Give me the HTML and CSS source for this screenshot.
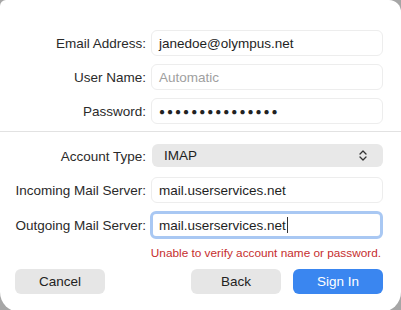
FILE: index.html
```html
<!DOCTYPE html>
<html lang="en">
<head>
    <meta charset="UTF-8" />
    <meta name="viewport" content="width=device-width, initial-scale=1" />
    <title>Add Account</title>
    <link rel="stylesheet" href="styles.css">
</head>
<body>
    <div class="dialog">
        <div class="fields">
            <label class="label" for="email">Email Address:</label>
            <div class="field"><span class="value">janedoe@olympus.net</span></div>
            <label class="label" for="user">User Name:</label>
            <div class="field"><span class="placeholder">Automatic</span></div>
            <label class="label" for="password">Password:</label>
            <div class="field"><span class="dots">●●●●●●●●●●●●●●●</span></div>
        </div>
        <div class="separator"></div>
        <div class="fields server-fields">
            <label class="label">Account Type:</label>
            <div class="select">
                <span class="value">IMAP</span>
                <svg class="chevron" width="8" height="11" viewBox="0 0 8 11">
                    <path d="M1 4 L4 1 L7 4 M1 7 L4 10 L7 7" fill="none" stroke="#333" stroke-width="1.3" stroke-linecap="round" stroke-linejoin="round"/>
                </svg>
            </div>
            <label class="label">Incoming Mail Server:</label>
            <div class="field"><span class="value">mail.userservices.net</span></div>
            <label class="label">Outgoing Mail Server:</label>
            <div class="field focused"><span class="value">mail.userservices.net</span><span class="caret"></span></div>
        </div>
        <div class="error">Unable to verify account name or password.</div>
        <div class="buttons">
            <button class="button">Cancel</button>
            <div class="spacer"></div>
            <button class="button">Back</button>
            <button class="button primary">Sign In</button>
        </div>
    </div>
</body>
</html>
```

FILE: styles.css
```css
body, html {
    margin: 0;
    padding: 0;
    height: 100%;
    overflow: hidden;
    background: #a6a6a6;
    font-family: 'Liberation Sans', Arial, sans-serif;
    font-size: 13.5px;
    color: #222222;
}
.dialog {
    box-sizing: border-box;
    width: 401px;
    height: 312px;
    background: #ffffff;
    border-radius: 6px 12px 20px 20px;
    padding: 30px 18px 0 15px;
}
.fields {
    display: grid;
    grid-template-columns: 131px 1fr;
    column-gap: 5px;
    row-gap: 8px;
    align-items: center;
}
.label {
    text-align: right;
    color: #2a2a2a;
}
.field {
    box-sizing: border-box;
    height: 26px;
    border: 1px solid #ededed;
    border-radius: 6px;
    background: #ffffff;
    padding: 0 7px;
    display: flex;
    align-items: center;
}
.value {
    color: #1e1e1e;
}
.placeholder {
    color: #a0a0a0;
}
.dots {
    font-size: 10px;
    letter-spacing: 2px;
    color: #222222;
}
.separator {
    height: 1px;
    background: #e2e2e2;
    margin: 7px -18px 12px -15px;
}
.server-fields {
    row-gap: 8px;
}
.select {
    box-sizing: border-box;
    height: 23px;
    margin-left: 1px;
    border-radius: 6px;
    background: #e8e8e8;
    padding: 0 16px 0 12px;
    display: flex;
    align-items: center;
    justify-content: space-between;
    margin-bottom: 2px;
}
.focused {
    height: 28px;
    margin-left: -1px;
    border: 3px solid #a9c8f3;
    padding: 0 6px;
}
.caret {
    width: 1px;
    height: 16px;
    background: #333333;
    margin-left: 1px;
}
.error {
    text-align: right;
    color: #c62d2d;
    font-size: 11.8px;
    margin-top: 7px;
    padding-right: 2px;
}
.buttons {
    display: flex;
    gap: 12px;
    margin-top: 9px;
}
.spacer {
    flex: 1;
}
.button {
    width: 90px;
    height: 25px;
    border: none;
    border-radius: 6px;
    background: #e6e6e6;
    font-family: 'Liberation Sans', Arial, sans-serif;
    font-size: 13.5px;
    color: #222222;
    padding: 0;
}
.primary {
    background: #3a86f0;
    color: #ffffff;
}
```
